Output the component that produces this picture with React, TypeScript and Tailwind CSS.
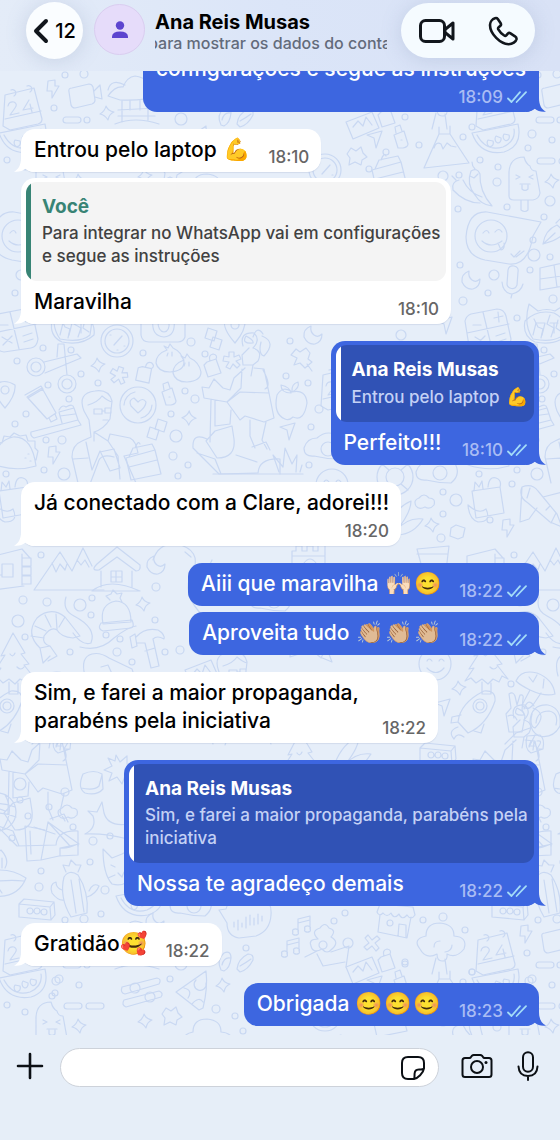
import type { ReactNode } from "react";

/* ---------- Wallpaper ---------- */

const SHAPES: Record<string, string> = {
  calendar:
    "M-17 -12L12 -19L20 12Q20 16 16 17L-12 23L-19 19ZM-17 12L19 4M-11 -17a3 3 0 1 1 3 6M5 -21a3 3 0 1 1 3 6M-14 -1Q-13 -6 -8 -5Q-4 -3 -7 1L-12 8L-3 6M7 -7L1 3L11 1M8 -3L10 5",
  bolt: "M-5 -8L2 -9L2 -3L6 -3L-1 9L-1 2L-6 2Z",
  video: "M-14 -5Q-15 -9 -11 -9L6 -13Q9 -13 10 -10L12 3Q12 6 9 7L-8 11Q-11 11 -12 8ZM11 -6L17 -12L19 2L12 0",
  pill: "M-6 -3H6A3 3 0 0 1 6 3H-6A3 3 0 0 1 -6 -3Z",
  sparkle: "M-1 -7Q1 -2 7 -1Q2 1 1 7Q-2 2 -7 1Q-2 -2 -1 -7Z",
  hut: "M-27 -6Q-20 -16 -12 -15Q-8 -25 0 -26Q16 -24 21 -6Q10 -1 -15 -2ZM-13 -2V20M13 -2V18M-17 8L22 6M-17 14H20M-20 22Q0 14 24 22M-5 -2V8M5 -2V8M-27 -12Q-24 -24 -10 -17",
  sandals: "M-15 8Q-20 -2 -12 -9Q-5 -12 -5 -4Q-6 6 -12 9ZM-14 3Q-12 -5 -6 -4M1 7Q2 -3 12 -8Q18 -8 17 -2Q12 8 4 10ZM4 4Q11 0 15 -3",
  melon: "M-24 -7L22 -16Q27 6 8 12Q-16 16 -24 -7ZM-19 -5Q-10 12 7 7Q20 1 18 -11M-8 0a3 4 0 1 0 5 1ZM0 -4a3 4 0 1 0 5 2ZM8 -6a3 4 0 1 0 5 1Z",
  bottle: "M-6 -3L4 -7L8 6Q8 9 3 10L-2 10L-6 -3ZM-4 -5L-5 -11L0 -13L2 -7M1 2h1",
  plane: "M-8 -4L7 -8L1 9L-1 -1Z",
  star: "M-6 -8L-1 -5L4 -9L6 -3L10 1L5 4L4 9L-2 6L-8 9L-7 2L-10 -2Z",
  volcano: "M-21 17L-6 -17H5L24 12ZM-11 -3Q-9 -10 -4 -7L-2 -2L2 -8L6 -5L11 -4M-6 -17V-24M5 -17V-25",
  tree: "M-20 -4Q-28 -14 -14 -17Q-14 -30 0 -30Q14 -29 14 -17Q28 -16 24 -4Q16 6 7 1Q8 8 2 8Q-3 8 -3 1Q-14 7 -20 -4ZM-4 5L-8 21M5 6L7 21M-6 -6Q-6 -12 0 -12M5 -1Q12 -2 12 -8",
  popsicle: "M-16 16V-8Q-15 -23 -1 -23Q1 -16 5 -14Q6 -9 11 -9L15 13Q14 19 8 20H-11Q-16 20 -16 16ZM-4 20V30Q0 33 3 30V20M-9 -5L-5 -3L-9 -1M8 -5L4 -3L8 -1M-5 4H5M-3 5V9Q0 12 3 9V5",
  pepper: "M-2 -18Q4 -22 7 -15Q6 2 19 17Q8 16 2 6Q-7 -5 -2 -18ZM-14 -9Q-22 -7 -20 1Q-8 14 7 14M-10 -9Q-4 4 9 8M-3 -13L1 -11L5 -15M2 -20Q-1 -23 -1 -27M-17 -9L-21 -13",
  bubble: "M-31 -1Q-29 -27 -10 -26L44 -16L36 -2Q31 28 12 26L-12 22Q-31 18 -31 -1ZM-22 -2a16 16 0 1 0 32 0a16 16 0 1 0 -32 0M-14 -5Q-10 -10 -8 -5M-2 -6Q2 -11 5 -6M-15 3Q-6 11 5 3M1 5L4 12Q8 11 7 5M14 16L17 19L23 13M19 19L27 13",
  moon: "M-2 -9Q-10 -6 -9 2Q-5 10 2 9Q9 7 9 -1Q5 3 1 0Q-3 -3 -2 -9Z",
  mic: "M-5 -13Q-4 -18 1 -17Q6 -16 5 -11L4 2Q2 7 -3 5Q-6 4 -6 1ZM-11 -1Q-10 10 -1 11Q8 9 10 1M-1 11L-2 15",
  calc: "M-22 -8Q-21 -13 -16 -15L10 -20Q17 -20 19 -13L24 10Q23 18 17 19L-10 23Q-17 22 -18 17ZM-20 4L22 -5M-4 -17L5 20M-14 -4H-6M7 -11L16 -13M11 -17L12 -7M-12 8L-2 14M-2 7L-11 16M9 7L18 4M10 13L19 10",
  cat: "M-18 -21L-9 -14Q0 -17 8 -14L17 -20Q19 -6 16 10Q7 18 -14 14Q-24 0 -18 -21ZM-11 -2L-14 10M-11 -2H-2L-5 10M3 -2H11M7 -2V8",
  cube: "M-12 -7L15 -13L18 10L-12 15ZM-12 4L17 0M2 -10L5 12",
  pen: "M-12 14Q-10 0 2 -5L10 2Q4 10 -12 14ZM-12 14L0 3M1 -7L8 -14L17 -4L11 3",
  donut: "M-20 -7Q-8 -19 9 -15Q24 -7 22 7Q10 18 -10 14Q-23 8 -20 -7ZM-11 -9L-7 -1L-2 1L-4 10M5 -13L2 -4L9 0L6 9M13 -8L11 0L17 4",
  clock: "M-16 0a16 16 0 1 0 32 0a16 16 0 1 0 -32 0M-12 0a12 12 0 1 0 24 0a12 12 0 1 0 -24 0M-3 4L5 -5M-7 -6h1M7 5h1M0 9h1",
  camera: "M-22 -12H22V5Q20 10 15 10H-14Q-21 10 -22 3ZM-10 -12Q-12 4 1 5Q13 4 11 -12M-5 -10Q-5 -1 1 0Q7 -1 6 -10",
  diamond: "M-3 -7L6 -4L3 6L-6 3Z",
  pin: "M0 13Q-13 -2 -10 -10Q-1 -17 10 -10Q11 0 0 13ZM-4 -5a4 4 0 1 0 8 0a4 4 0 1 0 -8 0",
  dumpling: "M-3 -7Q-14 -3 -14 6Q-12 15 0 15Q14 14 14 5Q12 -5 3 -9L0 -13L-2 -9L-6 -11ZM-2 -4L-3 -1M2 -5V-1",
  asterisk: "M-3 -8L2 -8L2 -3L7 -5L9 -1L4 1L8 5L5 8L1 4L-2 9L-6 7L-3 2L-9 1L-8 -4L-3 -3Z",
  bag: "M-6 -5L3 -8L8 6L-5 10L-9 -2ZM-3 -6Q-5 -12 0 -13Q5 -12 3 -8",
  pushpin: "M-11 -3L-6 -9L-2 -6L4 -10L8 -5L6 1L10 4L3 10L-2 5L-8 7L-5 0ZM5 6L10 13",
  scissors: "M-12 2a9 9 0 1 0 -18 0a9 9 0 1 0 18 0M-16 2a5 5 0 1 0 -10 0a5 5 0 1 0 10 0M19 19a9 9 0 1 0 -18 0a9 9 0 1 0 18 0M15 19a5 5 0 1 0 -10 0a5 5 0 1 0 10 0M-13 -3L20 -11L24 -7L-12 8M0 -8L1 -21L7 -21L10 10",
  tube: "M-13 -10L2 -19L16 6L7 12ZM-15 -12L1 -21L3 -18L-12 -9M9 11L11 15L17 12L15 7",
  cake: "M-27 8L20 -4L23 1L-24 14Q-28 12 -27 8ZM4 -1L1 -12L16 -16L20 -4M2 -8L17 -10M1 -14Q4 -20 8 -17Q15 -21 16 -16",
  heart: "M-18 0a18 18 0 1 0 36 0a18 18 0 1 0 -36 0M-14 0A14 14 0 0 1 -3 -13M14 0A14 14 0 0 1 3 13M0 8L-7 1Q-10 -5 -4 -7L0 -3Q5 -8 8 -3Q8 2 0 8Z",
  baker:
    "M-16 -18Q-23 -36 -5 -38Q9 -40 12 -28L10 -10Q4 0 -6 3V12M-16 -18L-11 -9L-9 8M-12 -24Q-2 -27 2 -33Q8 -28 12 -27M-6 -20H2V-15H-6ZM5 -21H11V-16H5ZM2 -18H5M3 -9H8M-9 8L-18 12Q-28 16 -28 28L-22 54M-6 3L8 12L10 5L30 9Q36 12 38 24L24 27M-14 13L-8 41L0 22M8 12L18 27L20 50M-27 30L-12 29M0 23L14 20L20 39L10 42L0 22M14 28Q0 24 -2 34L-10 55M24 27L36 54",
  hiker:
    "M-4 -52Q-8 -66 7 -65Q14 -58 6 -50Q16 -47 11 -37L6 -33L4 -22M2 -50L-5 -43L-4 -33L6 -33M6 -61Q10 -73 16 -64M6 -55Q-6 -54 -1 -62Q7 -58 6 -55M15 -62Q30 -56 17 -42Q11 -44 14 -56M-2 -30L-13 -20L-17 -8L-24 -10L-33 -19L-38 -10L-45 -11L-43 0L-20 4L-6 -10L-5 -29M7 -30L17 -29L22 -5L-7 -6L-20 4M16 -28Q25 -12 18 -9M-20 4L-7 22L-2 18L17 24L27 20L22 -5M-36 2L-37 44M-32 2L-32 28L-17 26L-16 12M3 22V38L8 50M19 24L15 42L20 51M-32 33L-15 28L-13 41Q-11 60 -30 60L-41 43ZM5 49L19 44L23 52M-40 41Q-55 34 -54 50L-28 76L11 75Q12 60 33 61V76M-50 55L-32 61L-26 76M10 64L-11 57",
  rock: "M0 2H90M66 0L60 -17L70 -5L72 -24L79 -8L84 -17L83 0M87 0L89 -7",
  apple: "M0 -10Q-9 -17 -15 -7Q-19 12 -7 17Q-3 19 1 15Q12 20 15 1Q14 -13 0 -10ZM-1 -9Q-2 -15 -11 -17Q-11 -9 -1 -9M0 -10Q-1 -18 6 -20Q8 -14 0 -10",
  taco: "M-21 11Q-23 -12 -3 -17Q16 -18 20 12Q0 18 -21 11ZM-21 -2L-19 -12L-14 -11L-12 -18L-6 -17L-2 -21L4 -18L10 -19L12 -13L19 -13L19 -6L22 -3L20 6M9 4h1M14 7h1M12 0h1",
  crate: "M-17 0L12 -8L18 16L-12 22ZM-14 9L14 2M-14 -1L-10 -10L9 -14L12 -8M-8 -10Q-5 -18 -3 -14",
  egg: "M-20 0Q-17 -10 -7 -10Q4 -20 18 -10Q26 2 15 11Q2 11 -10 8Q-20 9 -20 0ZM-3 1a7 7 0 1 0 14 0a7 7 0 1 0 -14 0",
  buoy: "M-18 0a18 18 0 1 0 36 0a18 18 0 1 0 -36 0M-9 0a9 9 0 1 0 18 0a9 9 0 1 0 -18 0M-13 -13L-6 -7M13 -13L6 -7M-13 13L-6 7M13 13L6 7",
  smiley: "M-16 0a16 16 0 1 0 32 0a16 16 0 1 0 -32 0M-8 -3Q-6 -7 -3 -3M4 -3Q6 -7 9 -3M-8 4Q1 13 9 4",
  cloud: "M-9 4Q-12 -2 -6 -4Q-1 -10 4 -4Q11 -4 9 3Q5 8 0 5Q-6 8 -9 4Z",
  lunch: "M-14 -9L14 -13L18 13L-10 18ZM-12 -9L-11 -18L-7 -13L-4 -19L-3 -11M2 -13Q3 -24 10 -22Q16 -20 14 -13M-18 5Q-7 15 0 9Q6 22 -8 22Q-17 19 -18 5",
  carrot: "M-18 -18Q-8 -22 -2 -14L17 9L22 22L10 17L-12 -2Q-22 -8 -18 -18ZM-18 -18L-20 17L-11 14L-3 3M3 -8L22 -13M-10 -17L-13 -7M6 5L10 1M11 18L16 8",
  bone: "M-7 -4L-2 -7L7 -4L5 5L0 7L-8 4Z",
  leaves: "M-18 8Q-10 -12 6 -19Q6 -7 -9 11M-9 11Q2 -3 18 -1Q9 14 -7 15Z",
  hammer: "M-20 -4L-15 -7L-13 5L-18 7ZM-14 -4Q-5 -14 8 -11Q15 -7 14 -2Q7 -6 3 -2L9 25L1 27L-5 2L-13 2M-5 10L5 7",
  mountains: "M-34 20L-8 -18L4 1L15 -22L24 -4M-34 20H36M-16 -7L-12 2L-8 -6L-3 0L-1 -6M9 -10L13 -5L17 -10L21 -3",
  house: "M-19 -3L1 -20L24 -2Q25 4 20 4L1 -10L-17 3Q-26 4 -19 -3ZM-15 4V20M16 4V20M-5 4H6V15H-5ZM0 4V15M-5 10H6M-24 24Q-7 10 24 24Z",
  beanie: "M-13 10Q-17 -10 0 -13Q15 -12 15 8ZM-15 9L16 6Q19 13 15 14L-13 17Q-19 15 -15 9ZM-6 -14L-10 -18L-5 -20L-3 -24L1 -20L6 -21L4 -16L6 -12L0 -13",
  shrimp: "M-3 22L-10 29L-13 14Q-28 0 -16 -16Q-2 -28 12 -17L27 2L20 4Q8 3 4 -4Q-2 -8 -9 2Q-11 10 -3 12L4 22L-5 27M-18 -8L-7 -3M-22 2L-9 4M-8 -19L-2 -7M3 -20L4 -5M12 -17L6 -7M-13 14L-3 12",
  board: "M-15 12Q-20 -7 -8 -10Q0 -12 9 -6L32 5Q35 11 29 15M1 3L8 1L13 12",
  pine: "M0 -28L-12 -5L-8 -6L-17 8L-12 7L-21 20L-15 17L-10 22L-4 18L2 23L7 18L13 21L16 15L22 18L11 4L16 3L8 -7L12 -8ZM-4 21V33H5V22M-3 -7Q0 -3 2 -8M4 6Q8 10 11 6",
  cabin: "M-16 -12L12 -19L20 -10M-16 -12V22L14 18M12 -14V17M-8 -4H3V9H-8ZM12 -10h9v8h-9M12 -1h9v8h-9M12 8h9v8h-9M-16 7H-8",
  rocket: "M-18 9Q-16 -10 8 -22Q20 -23 19 -12Q11 12 -8 20ZM-3 -7a7 7 0 1 0 14 0a7 7 0 1 0 -14 0M0 -7a4 4 0 1 0 8 0a4 4 0 1 0 -8 0M-15 2L-24 4L-25 10L-18 9M8 11L5 20L-2 18M-18 14Q-29 18 -22 26Q-19 19 -12 24",
  road: "M-34 -10Q-28 -28 -10 -26Q15 -20 6 2Q-8 23 18 48M25 -10Q12 13 36 26M-2 -18L4 -13M8 -4L5 4M5 10L7 18M11 25L17 32",
  swirl: "M-26 -20Q-30 -7 -18 -1Q5 11 -1 26Q-10 29 -19 16M-12 30Q8 35 22 21Q36 10 44 9",
  mug: "M-18 -13L14 -16L10 17H-10ZM-18 -8H13M-15 8L10 5",
  castle: "M-18 16V-9H-14V-14H-8V-9H-3V-14H3V-9H8V-15H15V16M-6 16V3Q0 -5 6 3V16M-18 -4H15",
  mushroom: "M-21 -6Q-16 -18 0 -14Q16 -8 18 7Q8 10 -7 3Q-17 -2 -21 -6ZM-7 3L-15 18Q-10 25 -4 18L4 6M-8 -10L-4 -5L0 -12M7 -8L6 1",
  peace: "M-6 20L-9 2L-4 -4L-6 -18Q-2 -21 0 -16L2 -7L5 -17Q9 -18 8 -13L7 -2L10 4L7 20ZM-7 4Q-1 1 2 8",
  astro: "M-15 0Q-14 -18 3 -17Q17 -14 15 4Q8 17 -6 14Q-14 10 -15 0ZM-9 1Q-8 -11 4 -11Q14 -9 11 3M-15 6L-29 11L-40 22M-10 13L-16 25",
  tag: "M-8 -8L5 -9Q10 -5 8 5L-4 9Q-11 5 -8 -8ZM-4 -3L-6 2H0M-1 -2L-2 6M2 -3Q7 -4 5 0L2 5H7",
  splat: "M-4 -14L0 -7L7 -13L7 -5L15 -4L9 1L14 9L5 7L2 15L-3 8L-11 12L-8 4L-16 1L-8 -3L-12 -11L-5 -8Z",
  toast: "M-9 -9Q2 -14 10 -9L11 6Q5 13 -7 10Q-15 5 -9 -9ZM-11 5Q2 8 7 3L10 -8",
  globe: "M-19 0a19 19 0 1 0 38 0a19 19 0 1 0 -38 0M-9 -16Q8 0 -3 19M8 -17Q18 0 5 18M-18 -5Q0 -12 18 -5M-19 5Q0 -3 19 5",
  whale: "M-20 15Q-8 9 -12 -3L-17 -8L-8 -7L-3 -17L-1 -6Q3 8 23 5M-20 15Q0 14 23 20",
  tent: "M-25 -14L-23 21L-9 20L-2 -18L29 4L10 8M-25 -14L-5 -10M-20 -9L-19 14M-9 20L9 16L28 15V4Q17 9 10 8V16M-2 -18L20 6",
  drink: "M-16 -6Q8 -12 26 0Q17 24 -18 17M-16 5Q7 1 24 3M-16 12L-5 5L2 15M-1 -8Q-9 -22 1 -28Q10 -18 5 -10M2 -20V-10",
  cactus: "M-3 30Q-15 10 -10 -10Q-5 -18 4 -12Q15 5 13 26ZM-12 3Q-18 1 -18 -5Q-25 -3 -22 6Q-16 14 -10 13M13 10Q22 7 25 -1Q19 -5 15 4M-3 -7L2 26M5 -8L10 25M-8 -15L-11 -22L-5 -21L-3 -27L2 -22L7 -22L4 -15",
  fox: "M-17 -19L-8 -10L2 -14L13 -20L15 5Q7 20 -8 16Q-17 6 -17 -19ZM-9 -3L-5 -1M5 -4L9 -5M-2 5L2 9L4 4M-12 10L-5 7M7 8L14 12",
  radio: "M-18 -7L-13 -12L17 -9L18 4L14 9L-18 6ZM-18 -7L13 -4L14 9M13 -4L17 -9M-10 0a3 3 0 1 0 6 0a3 3 0 1 0 -6 0M-3 0a3 3 0 1 0 6 0a3 3 0 1 0 -6 0M4 1a3 3 0 1 0 6 0a3 3 0 1 0 -6 0",
  voice: "M-28 -9L-21 -10Q-20 -16 -13 -16L17 -20Q25 -17 24 -4Q23 12 9 17L-8 19Q-20 17 -20 4ZM-13 3V8M-9 1V11M-5 4V8M-1 -2V9M3 -4V6M7 -1V6M11 -5V5M15 -3V2",
  sliders: "M-20 2L15 -7Q20 -6 17 -1L-17 9Q-22 8 -20 2ZM-12 3a5 5 0 1 0 10 0a5 5 0 1 0 -10 0M-18 15L17 6Q22 8 19 12L-16 22Q-21 20 -18 15ZM3 12a5 5 0 1 0 10 0a5 5 0 1 0 -10 0",
  pizza: "M-17 2L13 -19Q15 -2 10 18L6 20ZM-9 -2Q0 0 -5 8M3 -10a6 6 0 1 0 10 3M-1 14Q6 6 10 12",
  shop: "M-15 -11L18 -8L20 0Q16 6 12 0Q7 6 4 -1Q-1 5 -4 -2Q-8 3 -12 -2Q-16 2 -18 -3ZM-15 0L-17 17L12 23L16 2M-8 8a3 3 0 1 0 6 0a3 3 0 1 0 -6 0M3 21L4 9L11 10V22",
  cross: "M-7 -5L-4 -8L0 -3L5 -7L8 -4L3 0L7 5L4 8L0 3L-5 7L-8 4L-3 0Z",
  note: "M-5 7V-6L7 -9V4M-5 7a3 2 0 1 1 -5 0a3 2 0 1 1 5 0M7 4a3 2 0 1 1 -5 0a3 2 0 1 1 5 0M-5 -2L7 -5",
  bouquet: "M-5 -5Q-13 -13 -3 -16Q2 -23 6 -16Q14 -14 8 -7Q17 -2 9 5Q4 11 -1 5Q-10 10 -12 2Q-15 -5 -5 -5ZM-18 13L-6 7M-6 10L0 22L22 18M8 8L26 2L23 23M-4 1a4 4 0 1 0 8 0a4 4 0 1 0 -8 0",
  photo: "M-15 0L11 -10L18 6L-8 17ZM-8 5L-3 -1L2 4L5 -5L11 3",
};

type Doodle = [string, number, number, number?];

const DOODLES: Doodle[] = [
  ["calendar", 22, 107], ["bolt", 53, 89], ["video", 83, 97], ["pill", 72, 120], ["sparkle", 107, 113], ["hut", 135, 102],
  ["sandals", 236, 117], ["melon", 23, 140], ["bottle", 400, 138], ["plane", 375, 139], ["star", 357, 156], ["volcano", 445, 151],
  ["tree", 440, 108], ["cross", 372, 98], ["bag", 387, 117], ["photo", 361, 122], ["popsicle", 52, 180], ["pepper", 473, 189],
  ["pill", 73, 161], ["pill", 95, 161], ["sparkle", 79, 181], ["sparkle", 145, 176], ["bubble", 24, 238], ["pen", 82, 230],
  ["moon", 471, 280], ["mic", 40, 283], ["calc", 14, 329], ["cat", 74, 325], ["cube", 79, 275], ["plane", 445, 325],
  ["sliders", 142, 140], ["pizza", 193, 145], ["sparkle", 223, 140], ["star", 172, 171], ["tree", 207, 204], ["heart", 128, 230],
  ["clock", 325, 170], ["apple", 335, 210], ["crate", 389, 170], ["donut", 72, 328], ["clock", 117, 341], ["camera", 163, 332],
  ["diamond", 211, 335], ["diamond", 216, 344], ["pin", 235, 330], ["moon", 313, 335], ["dumpling", 170, 357], ["dumpling", 187, 367],
  ["asterisk", 232, 360], ["bag", 213, 367], ["pushpin", 302, 358], ["scissors", 57, 365], ["sparkle", 98, 365], ["asterisk", 119, 375, 20],
  ["bag", 145, 374, 30], ["tube", 40, 407], ["cake", 58, 424], ["heart", 138, 405], ["bottle", 168, 395], ["sparkle", 189, 418, 10],
  ["diamond", 153, 434], ["diamond", 161, 426], ["baker", 100, 429], ["hiker", 247, 398], ["rock", 213, 472], ["apple", 292, 402],
  ["taco", 16, 454], ["bolt", 54, 455], ["crate", 143, 458], ["plane", 288, 431], ["egg", 324, 448], ["pin", 5, 395],
  ["calendar", 340, 387], ["buoy", 395, 477], ["smiley", 332, 485], ["egg", 436, 472], ["cloud", 425, 502],
  ["sparkle", 432, 525], ["lunch", 13, 500], ["carrot", 67, 505], ["bolt", 508, 528], ["bone", 458, 532], ["leaves", 405, 520],
  ["mountains", 68, 570], ["house", 116, 567], ["moon", 156, 565], ["road", 187, 570], ["swirl", 92, 617], ["beanie", 116, 614],
  ["sparkle", 143, 604], ["shrimp", 53, 634], ["hammer", 150, 641], ["board", 100, 664], ["pine", 13, 661], ["cabin", 10, 568],
  ["castle", 310, 560], ["mug", 435, 562], ["smiley", 435, 664], ["sparkle", 459, 688], ["mushroom", 64, 687],
  ["plane", 443, 707], ["rocket", 3, 713], ["peace", 42, 712], ["astro", 72, 722], ["tag", 62, 744], ["baker", 235, 690],
  ["carrot", 310, 640], ["photo", 200, 670], ["egg", 270, 600], ["radio", 438, 755], ["leaves", 353, 755],
  ["hiker", 45, 770], ["splat", 120, 769], ["toast", 92, 783], ["globe", -3, 812],
  ["cloud", 68, 812], ["whale", 105, 819], ["tent", 50, 840], ["drink", 0, 878], ["cactus", 74, 887], ["fox", 120, 868],
  ["radio", 37, 911], ["melon", 140, 903], ["voice", 247, 919], ["shop", 395, 915], ["note", 303, 925], ["note", 292, 947],
  ["bouquet", 323, 944], ["egg", 190, 905], ["moon", 155, 922], ["cat", 270, 830], ["buoy", 350, 840],
  ["mountains", 360, 695], ["pine", 300, 760],
];

const DOTS: [number, number, number][] = [
  [65, 75, 3], [84, 74, 4], [54, 108, 3], [87, 120, 3], [181, 119, 6], [405, 117, 3], [419, 145, 3], [386, 152, 3], [369, 169, 3],
  [463, 137, 3], [472, 127, 3], [59, 134, 4], [79, 140, 3], [7, 160, 3], [55, 148, 3], [443, 176, 5], [459, 175, 3], [497, 182, 4],
  [25, 167, 3], [507, 207, 3], [458, 209, 3], [77, 201, 5], [71, 217, 3], [60, 240, 3], [61, 255, 6], [77, 257, 3], [57, 270, 3],
  [21, 275, 5], [460, 265, 3], [15, 293, 3], [463, 301, 4], [80, 299, 4], [44, 318, 3], [401, 335, 5], [43, 348, 3], [71, 350, 3],
  [143, 353, 3], [191, 342, 4], [205, 354, 3], [290, 341, 3], [17, 361, 3], [81, 374, 3], [48, 385, 3], [98, 383, 3], [286, 376, 3],
  [308, 383, 3], [69, 399, 3], [26, 414, 3], [185, 391, 3], [195, 399, 4], [171, 414, 3], [15, 424, 3], [319, 409, 4], [311, 427, 3],
  [46, 440, 3], [62, 440, 4], [176, 436, 6], [173, 456, 4], [44, 470, 3], [64, 474, 6], [188, 465, 3], [309, 465, 3], [6, 474, 3],
  [178, 476, 3], [456, 500, 6], [443, 492, 3], [443, 514, 3], [490, 520, 3], [441, 538, 4], [512, 484, 3], [41, 555, 3], [156, 587, 4],
  [23, 600, 4], [47, 602, 4], [80, 605, 6], [92, 598, 3], [91, 615, 3], [18, 621, 6], [155, 620, 3], [25, 637, 3], [106, 635, 3],
  [120, 639, 3], [117, 652, 4], [70, 652, 3], [132, 662, 3], [165, 652, 3], [180, 650, 4], [511, 684, 3], [20, 784, 6], [65, 792, 4],
  [49, 807, 3], [20, 800, 3], [28, 816, 3], [73, 827, 3], [93, 841, 4], [110, 836, 3], [90, 862, 3], [12, 838, 3], [41, 871, 3],
  [39, 887, 4], [105, 890, 4], [101, 914, 3], [348, 943, 5], [334, 921, 3], [345, 913, 3], [423, 920, 3], [443, 917, 4], [465, 930, 3],
  [405, 964, 3], [246, 948, 3], [170, 979, 3], [56, 981, 4], [52, 996, 3], [472, 972, 3], [216, 1009, 4], [235, 1016, 3], [243, 1031, 3],
];

function Tile() {
  return (
    <>
      {DOODLES.map(([name, x, y, turn], i) => (
        <path key={i} d={SHAPES[name]} transform={`translate(${x} ${y}) rotate(${turn ?? 0})`} />
      ))}
      {DOTS.map(([x, y, r], i) => (
        <circle key={i} cx={x} cy={y} r={r} />
      ))}
    </>
  );
}

function Wallpaper() {
  return (
    <svg
      aria-hidden="true"
      className="absolute inset-0 size-full"
      viewBox="0 71 560 964"
      preserveAspectRatio="xMidYMin slice"
      fill="none"
      stroke="#c9d8f2"
      strokeWidth="1.2"
      strokeLinecap="round"
      strokeLinejoin="round"
    >
      <Tile />
      <g transform="translate(473 0)"><Tile /></g>
      <g transform="translate(0 845)"><Tile /></g>
      <g transform="translate(473 845)"><Tile /></g>
    </svg>
  );
}

/* ---------- Messages ---------- */

function Emoji({ children }: { children: string }) {
  return <span className="inline-block w-[29px] text-center text-[22px] leading-6">{children}</span>;
}

function Ticks() {
  return (
    <svg className="h-3 w-5 shrink-0" viewBox="0 0 20 12" fill="none" stroke="#a3dcf8" strokeWidth="1.8" strokeLinecap="round" strokeLinejoin="round" role="img" aria-label="Lida">
      <path d="M1 7.5L4.5 11L13 1.2M9.6 11L19 1.2" />
    </svg>
  );
}

type BubbleProps = {
  mine?: boolean;
  tail?: boolean;
  time: string;
  quote?: { name: string; text: ReactNode };
  stacked?: boolean;
  className?: string;
  children: ReactNode;
};

function Bubble({ mine, tail = true, time, quote, stacked, className = "max-w-[427px]", children }: BubbleProps) {
  return (
    <article
      className={`relative flex flex-col rounded-[14px] ${
        mine ? "self-end bg-[#3d66e0] text-white" : "self-start bg-white text-black shadow-[0_1px_1px_rgba(120,140,180,0.18)]"
      } ${className}`}
    >
      {tail && (
        <svg
          aria-hidden="true"
          className={`absolute bottom-0 h-5 w-5 ${mine ? "-right-[7px] text-[#3d66e0]" : "-left-[7px] -scale-x-100 text-white"}`}
          viewBox="0 0 20 20"
          fill="currentColor"
        >
          <path d="M0 2H13V6C13 13 15.500 17.500 20 19.600C16 20.400 11.500 19.200 8.800 16.800C6.500 18.800 3.500 19.800 0 20Z" />
        </svg>
      )}
      {quote && (
        <blockquote
          className={`relative mx-[5px] mt-1 overflow-hidden rounded-[11px] py-[13px] pr-0.5 pl-4 ${mine ? "bg-[#3052b5]" : "bg-[#f4f4f4]"}`}
        >
          <span aria-hidden="true" className={`absolute inset-y-0 left-0 w-[5px] ${mine ? "bg-white" : "bg-[#388475]"}`} />
          <cite className={`block text-[19px] leading-[23px] font-bold not-italic ${mine ? "text-white" : "text-[#388475]"}`}>{quote.name}</cite>
          <p className={`mt-1 text-[17px] leading-[23px] font-medium ${mine ? "text-[#c4d1f5]" : "text-[#414141]"}`}>{quote.text}</p>
        </blockquote>
      )}
      <div className={`relative flex justify-between gap-x-[17px] pr-3 pl-[13px] ${stacked ? "flex-col" : "items-end"}`}>
        <p className={`pt-[7px] text-[21px] leading-7 font-medium ${stacked ? "pb-1" : "pb-2"}`}>{children}</p>
        <span className={`flex shrink-0 items-center gap-1 self-end pb-[5px] text-[17px] leading-5 font-medium ${mine ? "text-[#a9bcf4]" : "text-[#666]"}`}>
          <time>{time}</time>
          {mine && <Ticks />}
        </span>
      </div>
    </article>
  );
}

export default function App() {
  return (
    <div className="flex h-screen min-h-[600px] flex-col bg-[#e6eef8] font-['Inter','Noto_Color_Emoji',sans-serif] text-black">
      <header className="flex h-[71px] shrink-0 items-start bg-linear-to-r from-[#e4ecf8] via-[#dbe5f8] to-[#d9e2f6] pr-[25px] pl-[26px]">
        <button type="button" aria-label="Voltar, 12 conversas" className="mt-0.5 flex size-[57px] shrink-0 items-center justify-center gap-1.5 rounded-full bg-[#fafdff] text-xl font-medium shadow-[0_2px_20px_rgba(120,140,180,0.25)]">
          <svg className="h-[26px] w-4" viewBox="0 0 16 26" fill="none" stroke="#11161c" strokeWidth="4" strokeLinecap="round" strokeLinejoin="round"><path d="M13 3L3 13L13 23" /></svg>
          12
        </button>
        <div className="mt-1 ml-[11px] flex size-[51px] shrink-0 items-center justify-center rounded-full border border-[#dacdf0] bg-[#e6dcfa]">
          <svg className="size-5" viewBox="0 0 20 20" fill="#5d45cf" role="img" aria-label="Foto do perfil"><circle cx="10" cy="5.500" r="4.200" /><path d="M2 18V16.500Q2.500 11.500 10 11.500Q17.500 11.500 18 16.500V18Z" /></svg>
        </div>
        <div className="mt-2.5 ml-2.5 min-w-0 flex-1">
          <h1 className="text-xl leading-6 font-bold whitespace-nowrap">Ana Reis Musas</h1>
          <p className="overflow-hidden -indent-[7px] text-base leading-[18px] font-medium whitespace-nowrap text-[#636b7b]">para mostrar os dados do contato</p>
        </div>
        <div className="mt-[3px] ml-3.5 flex h-[55px] w-[134px] shrink-0 items-center justify-between rounded-full bg-[#f5fbff] px-[17px] shadow-[0_2px_20px_rgba(120,140,180,0.25)]">
          <button type="button" aria-label="Chamada de vídeo">
            <svg className="h-[26px] w-[38px]" viewBox="0 0 38 26" fill="none" stroke="#11161c" strokeWidth="3" strokeLinejoin="round"><rect x="2.500" y="2.500" width="24" height="21" rx="5" /><path d="M27 11.500L35 5V21L27 14.500Z" /></svg>
          </button>
          <button type="button" aria-label="Chamada de voz">
            <svg className="size-[30px]" viewBox="0 0 30 30" fill="none" stroke="#11161c" strokeWidth="2.600" strokeLinejoin="round"><path d="M7 2.200C4.500 3 2 5.800 2 9C2 18 12.500 28 20.500 28.200C24.500 28.300 28 25.500 28.500 23.200C28.700 22 28 21 27 20.300L22.500 17.300C21.500 16.700 20.500 16.900 19.800 17.600L18.300 19.300C17.700 19.900 17 20 16.200 19.500C13.500 17.800 11.800 15.900 10.300 13.300C9.900 12.500 10 11.900 10.700 11.300L12.400 9.800C13.100 9.100 13.200 8.200 12.700 7.300L9.800 3C9.100 2.100 8.200 1.800 7 2.200Z" /></svg>
          </button>
        </div>
      </header>

      <main className="relative flex min-h-0 flex-1 flex-col justify-end overflow-hidden bg-[#e6eef9] px-[21px] pb-[9px]">
        <Wallpaper />
        <Bubble mine className="max-w-[396px]" time="18:09" stacked>Para integrar no WhatsApp vai em configurações e segue as instruções</Bubble>
        <Bubble className="mt-[17px] max-w-[427px]" time="18:10">Entrou pelo laptop <Emoji>💪</Emoji></Bubble>
        <Bubble className="mt-1.5 max-w-[430px]" time="18:10" quote={{ name: "Você", text: "Para integrar no WhatsApp vai em configurações e segue as instruções" }}>Maravilha</Bubble>
        <Bubble
          mine
          className="mt-[17px] max-w-[427px]"
          time="18:10"
          quote={{
            name: "Ana Reis Musas",
            text: <>Entrou pelo laptop <span className="inline-block w-7 text-center text-lg leading-6">💪</span></>,
          }}
        >
          Perfeito!!!
        </Bubble>
        <Bubble className="mt-[17px] max-w-[427px]" time="18:20" stacked>Já conectado com a Clare, adorei!!!</Bubble>
        <Bubble mine tail={false} className="mt-[17px] max-w-[427px]" time="18:22">Aiii que maravilha <Emoji>🙌🏻</Emoji><Emoji>😊</Emoji></Bubble>
        <Bubble mine className="mt-1.5 max-w-[427px]" time="18:22">Aproveita tudo <Emoji>👏🏼</Emoji><Emoji>👏🏼</Emoji><Emoji>👏🏼</Emoji></Bubble>
        <Bubble className="mt-[17px] max-w-[417px]" time="18:22">Sim, e farei a maior propaganda, parabéns pela iniciativa</Bubble>
        <Bubble mine className="mt-[17px] max-w-[415px]" time="18:22" quote={{ name: "Ana Reis Musas", text: "Sim, e farei a maior propaganda, parabéns pela iniciativa" }}>Nossa te agradeço demais</Bubble>
        <Bubble className="mt-[17px] max-w-[427px]" time="18:22">Gratidão<Emoji>🥰</Emoji></Bubble>
        <Bubble mine className="mt-[17px] max-w-[427px]" time="18:23">Obrigada <Emoji>😊</Emoji><Emoji>😊</Emoji><Emoji>😊</Emoji></Bubble>
      </main>

      <footer className="flex h-[105px] shrink-0 items-start pt-[13px] pr-[21px] pl-4">
        <button type="button" aria-label="Anexar" className="mt-1 shrink-0">
          <svg className="size-7" viewBox="0 0 28 28" stroke="#0b0f14" strokeWidth="2.600" strokeLinecap="round"><path d="M14 2V26M2 14H26" /></svg>
        </button>
        <div className="ml-4 flex h-[39px] min-w-0 flex-1 items-center rounded-full border border-[#cdd2da] bg-white pr-3 pl-4">
          <input type="text" aria-label="Mensagem" className="min-w-0 flex-1 bg-transparent text-xl outline-none" />
          <button type="button" aria-label="Figurinhas">
            <svg className="size-[26px]" viewBox="0 0 26 26" fill="none" stroke="#0b0f14" strokeWidth="2" strokeLinejoin="round"><path d="M8 2H18Q24 2 24 8V13.500C23.500 18 17.500 23.500 14 24H8Q2 24 2 18V8Q2 2 8 2ZM14 24C14.800 22.500 14.400 20.500 14.600 18.500Q15 14.700 18.500 14.500C20.500 14.200 22.500 14.900 24 13.500" /></svg>
          </button>
        </div>
        <button type="button" aria-label="Câmera" className="mt-[5px] ml-[22px] shrink-0">
          <svg className="h-[26px] w-8" viewBox="0 0 32 26" fill="none" stroke="#0b0f14" strokeWidth="2" strokeLinejoin="round"><path d="M4 5H8.500Q9.500 5 10 4L11 2.700Q11.700 2 12.700 2H19.300Q20.300 2 21 2.700L22 4Q22.500 5 23.500 5H28Q30.500 5 30.500 7.500V21.500Q30.500 24 28 24H4Q1.500 24 1.500 21.500V7.500Q1.500 5 4 5Z" /><circle cx="16" cy="14" r="6" /><circle cx="25" cy="9.500" r="1.500" fill="#0b0f14" stroke="none" /></svg>
        </button>
        <button type="button" aria-label="Gravar áudio" className="mt-[3px] ml-6 shrink-0">
          <svg className="h-[30px] w-[22px]" viewBox="0 0 22 30" fill="none" stroke="#0b0f14" strokeWidth="2" strokeLinecap="round"><rect x="6" y="1.200" width="10" height="19.500" rx="5" /><path d="M1.500 15.500Q2 25 11 25Q20 25 20.500 15.500M11 25V29" /></svg>
        </button>
      </footer>
    </div>
  );
}
